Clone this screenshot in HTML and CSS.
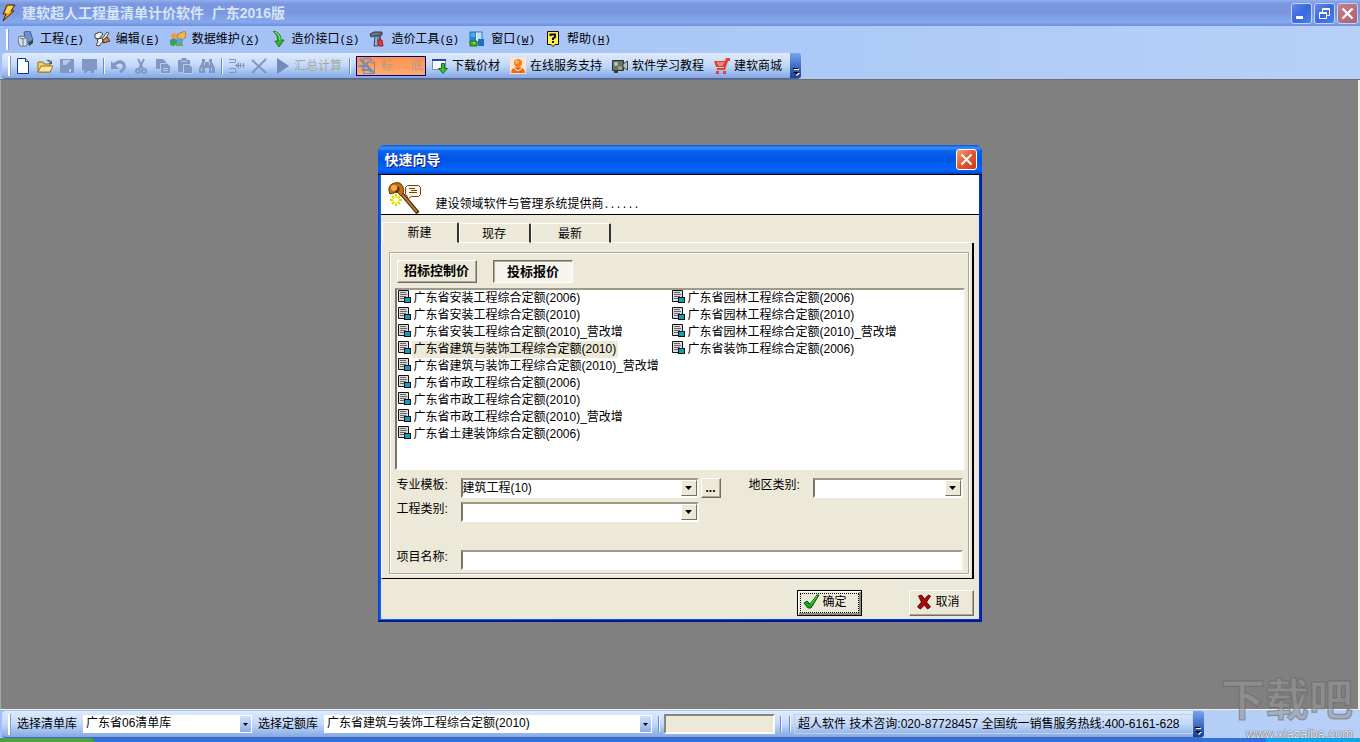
FILE: index.html
```html
<!DOCTYPE html>
<html lang="zh-CN">
<head>
  <meta charset="UTF-8">
  <meta name="viewport" content="width=device-width, initial-scale=1.0">
  <title>建软超人工程量清单计价软件 广东2016版</title>
  <link rel="stylesheet" href="styles.css">
</head>
<body>

  <!-- Shared icons -->
  <svg class="sprite" aria-hidden="true">
    <symbol id="doc" viewBox="0 0 13 13">
      <path d="M.5.5h10v11H.5z" fill="#dcdcdc" stroke="#111"/>
      <path d="M2 2.500h6M2 4.500h7M2 6.500h6M2 8.500h4" stroke="#666"/>
      <path d="M6 7h7v6H6z" fill="#111"/>
      <path d="M7 8h5v4H7z" fill="#149dbb"/>
    </symbol>
    <symbol id="arrow" viewBox="0 0 7 4">
      <path d="M0 0h7L3.500 4z" fill="#000"/>
    </symbol>
    <symbol id="more" viewBox="0 0 8 8">
      <path d="M1 0h5v1H1z" fill="#000"/>
      <path d="M2 1h5v1H2z" fill="#fff"/>
      <path d="M2 5h6L5 8z" fill="#fff"/>
      <path d="M1 4h6L4 7z" fill="#000"/>
    </symbol>
  </svg>

  <!-- Title bar -->
  <header class="titlebar">
    <svg class="app-icon" viewBox="0 0 16 16"><path d="M6 0h8l-4 6h3L2 16l3-7H2z" fill="#f59a16" stroke="#3f2a0c"/><path d="M7 1h5L8 8H4z" fill="#ffdc54"/></svg>
    <h1>建软超人工程量清单计价软件&nbsp; 广东2016版</h1>
    <div class="window-buttons">
      <button class="win-btn" aria-label="最小化"><svg viewBox="0 0 19 19"><path d="M4 12h7v3H4z" fill="#fff"/></svg></button>
      <button class="win-btn" aria-label="还原"><svg viewBox="0 0 19 19" fill="none" stroke="#fff"><path d="M7.500 8V4.500h7v7H12M7 5.500h8M4.500 8.500h7v6h-7zM4 9.500h8"/></svg></button>
      <button class="win-btn close-dim" aria-label="关闭"><svg viewBox="0 0 19 19" stroke="#fff" stroke-width="2.400"><path d="M4.500 4.500l10 10M14.500 4.500l-10 10"/></svg></button>
    </div>
  </header>

  <!-- Menu -->
  <nav class="menubar">
    <button class="menu-item">
      <svg viewBox="0 0 16 16"><path d="M6 1l6-1 3 9-7 3z" fill="#6c93d0" stroke="#46619c"/><path d="M0 6l5-1 4 2v7l-4 2-4-2z" fill="#d9dfe6" stroke="#69727f"/><path d="M2 7l3 1v7M5 8l3-1" fill="none" stroke="#69727f"/><path d="M10 12l5-3v3l-4 3z" fill="#3a3d43"/></svg>
      <span>工程<span class="key">(<u>F</u>)</span></span>
    </button>
    <button class="menu-item">
      <svg viewBox="0 0 16 16"><path d="M1 3l5-2 3 2-4 5-4-1zM3 8l5-1 1 3-4 5-3-1 2-3z" fill="#f3f3f0" stroke="#444"/><path d="M8 8l5-7 2 1-5 8z" fill="#e9edf0" stroke="#555"/><path d="M9 9l4-3 3 4-3 1-4 1z" fill="#c78d4c" stroke="#4d321b"/></svg>
      <span>编辑<span class="key">(<u>E</u>)</span></span>
    </button>
    <button class="menu-item">
      <svg viewBox="0 0 16 16"><path d="M8 3l7-3 1 6-6 5-3-3z" fill="#f4b452" stroke="#b47b28"/><circle cx="4" cy="5" r="3" fill="#f39a49"/><path d="M0 9q4-3 7 0v4H0z" fill="#3b83d2"/><circle cx="3" cy="12" r="3" fill="#3fa53b"/><circle cx="10" cy="10" r="3" fill="#53a0e8"/><path d="M6 13q4-3 7 0v2H6z" fill="#67ac4c"/></svg>
      <span>数据维护<span class="key">(<u>X</u>)</span></span>
    </button>
    <button class="menu-item">
      <svg viewBox="0 0 16 16"><path d="M3 0q8 1 8 9h3l-5 7-4-6h3Q8 4 3 0z" fill="#38b52c" stroke="#187c1e"/><path d="M5 1q5 2 5 8" fill="none" stroke="#9be687"/></svg>
      <span>造价接口<span class="key">(<u>S</u>)</span></span>
    </button>
    <button class="menu-item">
      <svg viewBox="0 0 16 16"><path d="M1 3l4-2h8v3l-4 1H5L2 6z" fill="#667583" stroke="#333d46"/><path d="M6 5h3v10H5z" fill="#8eb2cd" stroke="#34495a"/><path d="M11 1v8" stroke="#525d66" stroke-width="2"/><path d="M9 9h4l1 6h-4z" fill="#ea3b43" stroke="#a91624"/></svg>
      <span>造价工具<span class="key">(<u>G</u>)</span></span>
    </button>
    <button class="menu-item">
      <svg viewBox="0 0 16 16"><path d="M1 1h12v11H1z" fill="#e8f5fc" stroke="#1c72c6"/><path d="M1 1h6v9H1z" fill="#2485d7"/><path d="M2 3h4M2 5h4M8 3h4M8 5h4M8 7h4" stroke="#8ec7ee"/><path d="M9 8h6v7H9z" fill="#196ec9"/><path d="M1 10h7v5H1z" fill="#48aa2a" stroke="#247525"/><circle cx="5" cy="12" r="1" fill="#e6d34d"/></svg>
      <span>窗口<span class="key">(<u>W</u>)</span></span>
    </button>
    <button class="menu-item">
      <svg viewBox="0 0 16 16"><path d="M2.500.5h11v13H10l-2 2-2-2H2.500z" fill="#ffef4c" stroke="#111"/><path d="M5.500 5V3.500h4.500V6L8 7.500V9M8 10v2" fill="none" stroke="#111" stroke-width="2"/></svg>
      <span>帮助<span class="key">(<u>H</u>)</span></span>
    </button>
  </nav>

  <!-- Toolbar -->
  <div class="toolbar-row">
    <div class="toolbar">
      <button class="tool" aria-label="新建"><svg viewBox="0 0 16 16"><path d="M2.500.5h8l3 3v12h-11z" fill="#fff" stroke="#11349c"/><path d="M10.500.5v3h3" fill="#c4d8fb" stroke="#11349c"/></svg></button>
      <button class="tool" aria-label="打开"><svg viewBox="0 0 16 16"><path d="M1 14V4h5l1 2h6v8z" fill="#f7cf65" stroke="#95702a"/><path d="M1 14l3-6h12l-3 6z" fill="#ffe79a" stroke="#95702a"/><path d="M9 3q3-3 5 1l1-2v4h-4l2-1q-2-3-4-2z" fill="#505c6b"/></svg></button>
      <button class="tool" disabled aria-label="保存"><svg viewBox="0 0 16 16"><path d="M1 1h14v14H1z" fill="#8197c6"/><path d="M4 2h8v5H4z" fill="#b7caee"/><path d="M12 2L4 10h8z" fill="#8197c6"/><path d="M10 11h2v3h-2z" fill="#b7caee"/></svg></button>
      <button class="tool" disabled aria-label="批注"><svg viewBox="0 0 16 16"><path d="M1 1h15v11h-3v3h-3v-2H7l-4 3v-4H1z" fill="#8197c6"/></svg></button>
      <i class="sep"></i>
      <button class="tool" disabled aria-label="撤销"><svg viewBox="0 0 16 16"><path d="M3 7q5-5 9-2 4 5-3 9" fill="none" stroke="#8197c6" stroke-width="3"/><path d="M0 3v8h8z" fill="#8197c6"/></svg></button>
      <button class="tool" disabled aria-label="剪切"><svg viewBox="0 0 16 16" fill="none" stroke="#8197c6" stroke-width="2"><path d="M5 1l5 10M11 1L6 11"/><circle cx="5" cy="13" r="2"/><circle cx="11" cy="13" r="2"/></svg></button>
      <button class="tool" disabled aria-label="复制"><svg viewBox="0 0 16 16"><path d="M1 1h7l3 3v7H1z" fill="#8197c6"/><path d="M5.500 5.500h7l3 3v7h-10z" fill="#8197c6" stroke="#b7caee"/><path d="M8 10.500h5M8 12.500h5" stroke="#b7caee"/></svg></button>
      <button class="tool" disabled aria-label="粘贴"><svg viewBox="0 0 16 16"><path d="M1 2h3l1-2h4l1 2h3v12H1z" fill="#8197c6"/><path d="M6.500 6.500h6l3 3v6h-9z" fill="#8197c6" stroke="#b7caee"/><path d="M4 3.500h6" stroke="#b7caee"/></svg></button>
      <button class="tool" disabled aria-label="查找"><svg viewBox="0 0 16 16"><path d="M3 1h3v3h4V1h3v3l3 6v5h-6v-5H6v5H0v-5l3-6z" fill="#8197c6"/><path d="M2.500 10v3M12.500 10v3M5.500 4v3M10.500 4v3" stroke="#b7caee"/></svg></button>
      <i class="sep"></i>
      <button class="tool" disabled aria-label="插入"><svg viewBox="0 0 16 16" fill="none" stroke="#8197c6"><path d="M0 1.500h6.500v3H0M0 10.500h6.500v4H0M6 7.500h10"/><path d="M10 4.500L7 7.500l3 3" fill="#8197c6"/><path d="M11.500 5v5M14.500 5v5"/></svg></button>
      <button class="tool" disabled aria-label="删除"><svg viewBox="0 0 16 16" stroke="#8197c6" stroke-width="2"><path d="M1 2l14 13M15 1L1 15"/></svg></button>
      <button class="tool text-tool" disabled><svg viewBox="0 0 16 16"><path d="M3 0l12 8L3 16z" fill="#7189bc"/></svg>汇总计算</button>
      <i class="sep"></i>
      <button class="tool text-tool pressed" disabled><svg viewBox="0 0 16 16" fill="none" stroke="#718bb9"><path d="M4.500.5h7l4 4v11h-11zM11.500 1v4h4"/><path d="M1 1l14 14M0 8h10M3 12h9M10 3L3 12M7 6l5 8" stroke-width="2"/></svg><span>标</span><span>底</span></button>
      <button class="tool text-tool"><svg viewBox="0 0 16 16"><path d="M.5 1.500h13v10H.5z" fill="#fff" stroke="#718dc4"/><path d="M0 2h14" stroke="#254b9b" stroke-width="2"/><path d="M9.500 5.500h3v5h3l-4.500 5-4.500-5h3z" fill="#46b92f" stroke="#176f22"/></svg>下载价材</button>
      <button class="tool text-tool"><svg viewBox="0 0 16 16"><path d="M0 0h16v16H0z" fill="#ffe5cc"/><path d="M1 15q0-6 7-6t7 6z" fill="#ef6813"/><path d="M4 10q4 5 8 0" fill="none" stroke="#fff"/><circle cx="8" cy="5" r="4" fill="#f57c21"/><circle cx="7" cy="4" r="2" fill="#ffb362"/></svg>在线服务支持</button>
      <button class="tool text-tool"><svg viewBox="0 0 16 16"><path d="M.5 2.500h11v10H.5z" fill="#687268" stroke="#293329"/><path d="M11 6l4.500-3v9L11 9z" fill="#bdc7be" stroke="#374037"/><circle cx="4" cy="6" r="2" fill="#bdc7be"/><circle cx="8" cy="10" r="2" fill="#9ba79b"/><path d="M2 12h4v3H2z" fill="#334033"/></svg>软件学习教程</button>
      <button class="tool text-tool"><svg viewBox="0 0 16 16"><path d="M12 0h4v3h-2l-3 9H3v-2h7V9H2L0 3h11z" fill="#e5402e"/><path d="M3 5h7M4 7h5" stroke="#f6c2c4"/><path d="M2 13h3v3H2zM9 13h3v3H9z" fill="#e5402e"/></svg>建软商城</button>
      <button class="overflow" aria-label="更多"><svg viewBox="0 0 8 8"><use href="#more"/></svg></button>
    </div>
  </div>

  <!-- Workspace with the wizard dialog -->
  <main class="workspace">
    <section class="dialog" role="dialog" aria-labelledby="dialogTitle">
      <div class="dialog-title">
        <h2 id="dialogTitle">快速向导</h2>
        <button class="win-btn close" aria-label="关闭"><svg viewBox="0 0 19 19" stroke="#fff" stroke-width="2"><path d="M4.500 4.500l10 10M14.500 4.500l-10 10"/></svg></button>
      </div>
      <div class="banner">
        <svg viewBox="0 0 34 32">
          <path d="M13 11l17 20" stroke="#3c1e08" stroke-width="4"/>
          <path d="M13 11l16 19" stroke="#b57632" stroke-width="2"/>
          <path d="M2 12Q-1 5 4 2q8-4 11 3 2 6-2 9l-4-4z" fill="#bd6f14" stroke="#6b3503"/>
          <circle cx="6" cy="6" r="3" fill="#f4ad4b"/>
          <path d="M7 10q5-1 3-5" stroke="#5c2b04" fill="none" stroke-width="2"/>
          <path d="M19.500 3.500h11l2 2v7l-2 2h-7l-4 3v-3l-2-2v-7z" fill="#fff6e4" stroke="#6f421b"/>
          <path d="M21 6.500h6M23 8.500h6M21 10.500h8" stroke="#6f421b"/>
          <path d="M8 12v12M2 18h12M4 14l8 8M12 14l-8 8" stroke="#d5dc00" stroke-width="2"/>
          <circle cx="8" cy="18" r="3" fill="#fffec4" stroke="#f4f047"/>
        </svg>
        <p>建设领域软件与管理系统提供商<span class="dots">......</span></p>
      </div>

      <div class="tabs" role="tablist">
        <button class="tab active" role="tab" aria-selected="true">新建</button>
        <button class="tab" role="tab" aria-selected="false">现存</button>
        <button class="tab" role="tab" aria-selected="false">最新</button>
      </div>

      <div class="panel">
        <div class="group">
          <div class="modes">
            <button class="mode">招标控制价</button>
            <button class="mode down" aria-pressed="true">投标报价</button>
          </div>

          <ul class="quota-list" role="listbox" aria-label="定额">
            <li role="option"><svg><use href="#doc"/></svg><span>广东省安装工程综合定额(2006)</span></li>
            <li role="option"><svg><use href="#doc"/></svg><span>广东省安装工程综合定额(2010)</span></li>
            <li role="option"><svg><use href="#doc"/></svg><span>广东省安装工程综合定额(2010)_营改增</span></li>
            <li role="option" aria-selected="true" class="selected"><svg><use href="#doc"/></svg><span>广东省建筑与装饰工程综合定额(2010)</span></li>
            <li role="option"><svg><use href="#doc"/></svg><span>广东省建筑与装饰工程综合定额(2010)_营改增</span></li>
            <li role="option"><svg><use href="#doc"/></svg><span>广东省市政工程综合定额(2006)</span></li>
            <li role="option"><svg><use href="#doc"/></svg><span>广东省市政工程综合定额(2010)</span></li>
            <li role="option"><svg><use href="#doc"/></svg><span>广东省市政工程综合定额(2010)_营改增</span></li>
            <li role="option"><svg><use href="#doc"/></svg><span>广东省土建装饰综合定额(2006)</span></li>
            <li role="option"><svg><use href="#doc"/></svg><span>广东省园林工程综合定额(2006)</span></li>
            <li role="option"><svg><use href="#doc"/></svg><span>广东省园林工程综合定额(2010)</span></li>
            <li role="option"><svg><use href="#doc"/></svg><span>广东省园林工程综合定额(2010)_营改增</span></li>
            <li role="option"><svg><use href="#doc"/></svg><span>广东省装饰工程综合定额(2006)</span></li>
          </ul>

          <form class="fields">
            <label for="template">专业模板:</label>
            <div class="combo">
              <select id="template"><option>建筑工程(10)</option></select>
              <span class="drop"><svg><use href="#arrow"/></svg></span>
            </div>
            <button type="button" class="browse" aria-label="浏览">...</button>
            <label for="region">地区类别:</label>
            <div class="combo">
              <select id="region"><option></option></select>
              <span class="drop"><svg><use href="#arrow"/></svg></span>
            </div>

            <label for="category" class="first">工程类别:</label>
            <div class="combo">
              <select id="category"><option></option></select>
              <span class="drop"><svg><use href="#arrow"/></svg></span>
            </div>

            <label for="project" class="first name-row">项目名称:</label>
            <input type="text" id="project" class="name-row">
          </form>
        </div>
      </div>

      <div class="actions">
        <button class="action default">
          <span class="focus"><svg viewBox="0 0 17 16"><path d="M1 9l3-2 3 3 7-9h2L8 14H5z" fill="#14a51b" stroke="#075709"/><path d="M8 10l6-8" stroke="#59e349"/></svg>确定</span>
        </button>
        <button class="action">
          <span class="focus"><svg viewBox="0 0 16 16"><path d="M2 2l3-1 3 4 4-4 2 1-4 6 4 5-3 2-3-4-4 4-3-2 4-5z" fill="#a50b0b" stroke="#710000"/></svg>取消</span>
        </button>
      </div>
    </section>
  </main>

  <!-- Status bar -->
  <footer class="statusbar">
    <div class="status-strip">
      <label for="listLib">选择清单库</label>
      <div class="flat-combo short">
        <select id="listLib"><option>广东省06清单库</option></select>
        <span class="drop"><svg><use href="#arrow"/></svg></span>
      </div>
      <label for="quotaLib">选择定额库</label>
      <div class="flat-combo long">
        <select id="quotaLib"><option>广东省建筑与装饰工程综合定额(2010)</option></select>
        <span class="drop"><svg><use href="#arrow"/></svg></span>
      </div>
      <i class="sep"></i>
      <div class="progress"></div>
      <i class="sep"></i>
      <i class="sep"></i>
      <p class="contact">超人软件 技术咨询:020-87728457 全国统一销售服务热线:400-6161-628</p>
      <button class="overflow" aria-label="更多"><svg viewBox="0 0 8 8"><use href="#more"/></svg></button>
    </div>
  </footer>
  <div class="taskbar"><span class="start"></span><span class="tray"></span></div>

  <div class="watermark"><b>下载吧</b><span>www.xiazaiba.com</span></div>

</body>
</html>
```

FILE: styles.css
```css
* {
  box-sizing: border-box;
}
body {
  margin: 0;
  min-height: 100vh;
  display: flex;
  flex-direction: column;
  position: relative;
  background: #808080;
  color: #000;
  font: 12px/16px "Liberation Sans", "Noto Sans CJK SC", sans-serif;
}
h1, h2, p, ul {
  margin: 0;
  padding: 0;
}
button, input, select {
  font: inherit;
  color: inherit;
  margin: 0;
  padding: 0;
  border: 0;
  border-radius: 0;
  background: none;
}
button {
  white-space: nowrap;
}
.sprite {
  display: none;
}

/* Title bar */
.titlebar {
  display: flex;
  align-items: center;
  height: 26px;
  padding: 0 2px 0 1px;
  background: linear-gradient(#8fb0ee, #7a96df 4px, #7a96df 12px, #84a9ec 22px, #6f8ddc);
}
.app-icon {
  width: 16px;
  height: 18px;
  margin-right: 5px;
}
.titlebar h1 {
  flex: 1;
  color: #d8e4f8;
  font-size: 14px;
  line-height: 20px;
}
.window-buttons {
  display: flex;
  gap: 2px;
}
.win-btn {
  width: 21px;
  height: 21px;
  border: 1px solid #c0d2f6;
  border-radius: 3px;
  background: linear-gradient(135deg, #6488e8, #3a68de 50%, #4a80f0);
}
.win-btn svg {
  display: block;
  width: 19px;
  height: 19px;
}
.close-dim {
  background: linear-gradient(135deg, #c08090, #b06070);
}
.close {
  border-color: #fff;
  background: linear-gradient(135deg, #f0a080, #e4582e 50%, #c83c10);
}

/* Menu */
.menubar {
  display: flex;
  align-items: center;
  gap: 10px;
  height: 26px;
  padding-left: 18px;
  position: relative;
  background: linear-gradient(90deg, #a0bff6, #b6d0f8);
}
.menu-item {
  display: flex;
  align-items: center;
  gap: 6px;
}
.menu-item svg {
  width: 16px;
  height: 16px;
}
.key {
  font: 11px/16px "Liberation Mono", monospace;
}
.menubar::before,
.toolbar::before,
.status-strip::before {
  content: "";
  position: absolute;
  left: 6px;
  top: 3px;
  bottom: 2px;
  width: 2px;
  background: #fff;
  border-right: 1px solid #7f9ed8;
}

/* Toolbar */
.toolbar-row {
  display: flex;
  height: 28px;
  padding: 1px 0 0 2px;
  background: linear-gradient(90deg, #a0bff6, #b6d0f8);
  border-bottom: 1px solid #716f64;
}
.toolbar {
  position: relative;
  display: flex;
  align-items: center;
  gap: 4px;
  padding-left: 12px;
  border-radius: 4px;
  border-bottom: 1px solid #4468b4;
  background: linear-gradient(#dfebfd, #c2d8f8 50%, #83a8e6);
}
.tool {
  display: flex;
  align-items: center;
  justify-content: center;
  width: 18px;
  height: 22px;
}
.tool svg {
  flex: none;
  width: 16px;
  height: 16px;
}
.text-tool {
  width: auto;
  gap: 4px;
  padding: 0 4px 0 2px;
}
.text-tool:disabled {
  padding: 0 2px;
  color: #aaa79c;
}
.pressed {
  gap: 6px;
  width: 70px;
  height: 20px;
  border: 1px solid #000080;
  background: linear-gradient(#fe914e, #ffab70);
}
.pressed span:last-child {
  margin-left: auto;
}
.pressed:disabled {
  color: #b79a83;
}
.sep {
  width: 2px;
  height: 16px;
  margin: 0 1px;
  background: #6a8ccb;
  border-right: 1px solid #f1f9ff;
}
.overflow {
  align-self: stretch;
  display: flex;
  align-items: flex-end;
  justify-content: center;
  width: 11px;
  padding-bottom: 2px;
  border-radius: 0 3px 3px 0;
  background: linear-gradient(#76a4ee, #4570c8 50%, #173f98);
}
.overflow svg {
  width: 8px;
  height: 8px;
}

/* Workspace */
.workspace {
  flex: 1;
  display: flex;
  align-items: center;
  justify-content: center;
  padding-bottom: 23px;
  border-right: 2px solid #f4f1e4;
  border-bottom: 1px solid #f4f1e4;
  border-left: 1px solid #aca899;
}

/* Dialog */
.dialog {
  width: 604px;
  padding: 0 3px 3px;
  border-radius: 7px 7px 0 0;
  background: linear-gradient(90deg, #0831d9, #166aee 3px, #0a50e8 50%, #0030d0 602px, #00138c);
  box-shadow: inset 0 -2px #0018a0;
}
.dialog-title {
  display: flex;
  align-items: center;
  justify-content: space-between;
  height: 30px;
  margin: 0 -3px;
  padding: 1px 5px 0 7px;
  border-bottom: 1px solid #000;
  border-radius: 7px 7px 0 0;
  background: linear-gradient(#0a56d8, #3a91ff 3px, #0a62ee 6px, #0054e3 14px, #0166ff 25px, #0042c8);
}
.dialog-title h2 {
  color: #fff;
  font-size: 14px;
  line-height: 20px;
  text-shadow: 1px 1px #0a1883;
}
.banner {
  display: flex;
  align-items: flex-end;
  gap: 14px;
  height: 40px;
  padding-left: 7px;
  border-bottom: 1px solid #000;
  background: #fff;
}
.banner svg {
  width: 34px;
  height: 32px;
}
.dots {
  font: 10px/16px "Liberation Mono", monospace;
}
.tabs {
  display: flex;
  align-items: flex-end;
  padding: 7px 0 0 1px;
  background: #ece9d8;
}
.tab {
  width: 72px;
  height: 20px;
  padding-top: 2px;
  border-top: 1px solid #fff;
  border-left: 1px solid #fff;
  border-right: 2px solid #333;
  border-bottom: 1px solid #fff;
  border-radius: 2px 2px 0 0;
}
.tab:last-child {
  width: 80px;
}
.tab.active {
  width: 77px;
  height: 21px;
  border-bottom-color: #ece9d8;
}
.tabs::after {
  content: "";
  flex: 1;
  border-bottom: 1px solid #fff;
  margin-right: 6px;
}
.panel {
  padding: 9px 3px 4px 7px;
  border: 1px solid #fff;
  border-top: 0;
  border-right: 2px solid #000;
  border-bottom: 1px solid #000;
  box-shadow: 5px 0 #ece9d8;
  margin-right: 5px;
  background: #ece9d8;
}
.group {
  padding: 7px 3px 3px 5px;
  border: 1px solid #aca899;
  box-shadow: inset 1px 1px #fff, 1px 1px #fff;
}
.modes {
  display: flex;
  gap: 16px;
  padding-left: 2px;
}
.mode {
  width: 80px;
  height: 23px;
  border: 1px solid;
  border-color: #fff #716f64 #716f64 #fff;
  box-shadow: inset -1px -1px #aca899;
  font-size: 13px;
  font-weight: bold;
}
.mode.down {
  padding: 1px 0 0 1px;
  border-color: #716f64 #fff #fff #716f64;
  box-shadow: inset 1px 1px #aca899;
  background: #f6f4ec;
}
.quota-list {
  display: grid;
  grid-template-rows: repeat(9, 17px);
  grid-auto-flow: column;
  grid-auto-columns: 274px;
  align-content: start;
  overflow: hidden;
  min-height: 182px;
  margin-top: 5px;
  padding: 0 0 0 1px;
  list-style: none;
  background: #fff;
}
.quota-list,
.combo,
#project {
  border: 2px solid;
  border-color: #9d9a8c #f8f7f0 #fff #77746a;
}
.quota-list li {
  display: flex;
  align-items: flex-start;
  gap: 1px;
  white-space: nowrap;
}
.quota-list svg {
  width: 13px;
  height: 13px;
}
.quota-list span {
  padding: 0 2px;
  line-height: 17px;
}
.quota-list .selected span {
  background: #ece9d8;
}

/* Fields under the list */
.fields {
  display: grid;
  grid-template-columns: 66px 238px 22px 1fr 150px;
  row-gap: 4px;
  padding: 8px 2px 0 0;
}
.fields label {
  padding-left: 2px;
  line-height: 14px;
}
.fields label[for="region"] {
  padding-left: 28px;
}
.fields .first {
  grid-column: 1;
}
.fields .name-row {
  margin-top: 24px;
}
#project {
  grid-column: 2 / -1;
  width: 100%;
  height: 20px;
  background: #fff;
}
.combo {
  position: relative;
  height: 20px;
  background: #fff;
}
.combo select,
.flat-combo select {
  display: block;
  appearance: none;
  width: 100%;
  height: 16px;
  line-height: 16px;
  outline: 0;
}
.drop {
  position: absolute;
  top: 0;
  right: 0;
  bottom: 0;
  width: 16px;
  display: flex;
  align-items: center;
  justify-content: center;
  pointer-events: none;
  background: #ece9d8;
  border: 1px solid;
  border-color: #fff #716f64 #716f64 #fff;
}
.drop svg {
  width: 7px;
  height: 4px;
}
.browse {
  height: 20px;
  margin-left: 2px;
  border: 1px solid;
  border-color: #fff #716f64 #716f64 #fff;
  box-shadow: inset -1px -1px #aca899;
  font-weight: bold;
}

.actions {
  display: flex;
  justify-content: flex-end;
  gap: 47px;
  padding: 11px 5px 3px;
  background: #ece9d8;
}
.action {
  width: 65px;
  height: 26px;
  padding: 2px;
  border: 1px solid;
  border-color: #fff #716f64 #716f64 #fff;
  box-shadow: inset -1px -1px #aca899;
}
.action.default {
  border-color: #000;
  box-shadow: inset 1px 1px #fff, inset -2px -2px #8d8a7c;
}
.focus {
  display: flex;
  align-items: center;
  gap: 3px;
  height: 20px;
  padding: 0 0 2px 4px;
}
.default .focus {
  padding: 0 0 1px 2px;
  border: 1px dotted #000;
}
.focus svg {
  width: 17px;
  height: 16px;
}

/* Status bar */
.statusbar {
  display: flex;
  height: 28px;
  padding: 1px 0 0 2px;
  background: linear-gradient(90deg, #a0bff6, #b6d0f8);
}
.status-strip {
  position: relative;
  display: flex;
  align-items: center;
  gap: 6px;
  padding-left: 15px;
  border-radius: 4px;
  border-bottom: 1px solid #4468b4;
  background: linear-gradient(#dfebfd, #c2d8f8 50%, #83a8e6);
  white-space: nowrap;
}
.flat-combo {
  position: relative;
  height: 18px;
  padding-left: 2px;
  border: 1px solid #fff;
  background: #fff;
}
.flat-combo select {
  height: 14px;
  line-height: 14px;
}
.short {
  width: 169px;
}
.long {
  width: 328px;
}
.flat-combo .drop {
  width: 11px;
  border: 0;
  background: linear-gradient(#d2e2fb, #8dafe9);
}
.flat-combo .drop svg {
  width: 5px;
  height: 3px;
}
.status-strip .sep {
  margin: 0 1px 0 0;
}
.progress {
  width: 111px;
  height: 20px;
  margin: 0 -1px 0 -3px;
  border: 2px solid;
  border-color: #8a877a #fff #fff #8a877a;
  background: #ece9d8;
}
.contact {
  height: 20px;
  margin-left: -4px;
  padding: 1px 12px 1px 3px;
  border: 1px solid #c9cfdb;
}
.status-strip .overflow {
  margin-left: -6px;
}
.taskbar {
  display: flex;
  justify-content: space-between;
  height: 4px;
  background: #2f72dd;
}
.start {
  width: 94px;
  background: #4ba04b;
  border-radius: 0 4px 0 0;
}
.tray {
  width: 94px;
  background: #17a3ec;
}

/* Site mark laid over the corner */
.watermark {
  position: absolute;
  right: 7px;
  bottom: 2px;
  display: flex;
  flex-direction: column;
  align-items: flex-end;
  color: rgba(150, 150, 150, 0.6);
  pointer-events: none;
}
.watermark b {
  font-size: 44px;
  line-height: 52px;
  -webkit-text-stroke: 1px rgba(90, 90, 90, 0.5);
}
.watermark span {
  font-size: 13px;
  line-height: 13px;
  color: #e4eaf4;
  text-shadow: 0 0 1px #555, 0 0 1px #555;
}
```
